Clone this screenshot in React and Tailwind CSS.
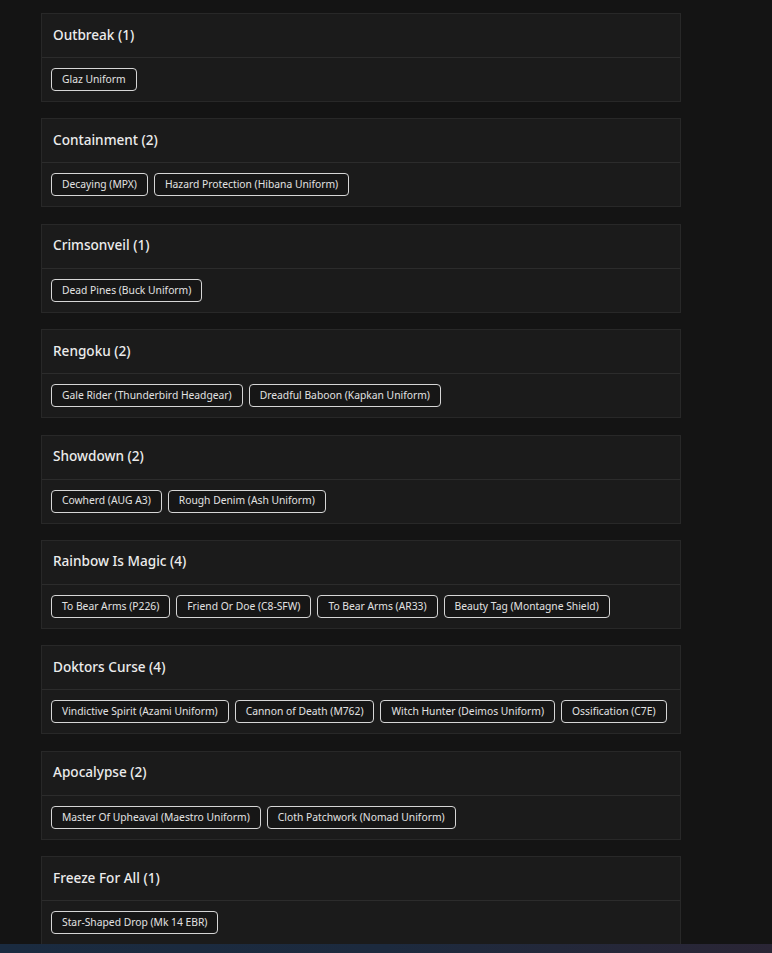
import React from 'react';

const groups = [
  { name: 'Outbreak', items: ['Glaz Uniform'] },
  { name: 'Containment', items: ['Decaying (MPX)', 'Hazard Protection (Hibana Uniform)'] },
  { name: 'Crimsonveil', items: ['Dead Pines (Buck Uniform)'] },
  { name: 'Rengoku', items: ['Gale Rider (Thunderbird Headgear)', 'Dreadful Baboon (Kapkan Uniform)'] },
  { name: 'Showdown', items: ['Cowherd (AUG A3)', 'Rough Denim (Ash Uniform)'] },
  {
    name: 'Rainbow Is Magic',
    items: ['To Bear Arms (P226)', 'Friend Or Doe (C8-SFW)', 'To Bear Arms (AR33)', 'Beauty Tag (Montagne Shield)'],
  },
  {
    name: 'Doktors Curse',
    items: ['Vindictive Spirit (Azami Uniform)', 'Cannon of Death (M762)', 'Witch Hunter (Deimos Uniform)', 'Ossification (C7E)'],
  },
  { name: 'Apocalypse', items: ['Master Of Upheaval (Maestro Uniform)', 'Cloth Patchwork (Nomad Uniform)'] },
  { name: 'Freeze For All', items: ['Star-Shaped Drop (Mk 14 EBR)'] },
];

const App = () => {
  return (
    <div
      className="relative h-[953px] overflow-hidden bg-[#141414] text-[#e6e6e6]"
      style={{ fontFamily: '"Noto Sans", "Open Sans", sans-serif' }}
    >
      <div className="ml-[41px] w-[640px] pt-[13px] flex flex-col gap-[16.4px]">
        {groups.map((g) => (
          <div key={g.name} className="bg-[#1b1b1b] border border-[#282828]">
            {/* Event header */}
            <div className="h-[44px] flex items-center px-[11px] border-b border-[#2c2c2c] pb-[2px]">
              <h3 className="text-[13.6px] font-medium text-[#ececec] leading-5">
                {g.name} ({g.items.length})
              </h3>
            </div>
            {/* Skins */}
            <div className="h-[43px] flex items-center gap-[6px] px-[9px]">
              {g.items.map((item, i) => (
                <span
                  key={i}
                  className="h-[23px] flex items-center px-[10px] rounded-[4px] border border-[#d6d6d6] bg-[#161616] text-[10.3px] text-[#e2e2e2] whitespace-nowrap"
                >
                  {item}
                </span>
              ))}
            </div>
          </div>
        ))}
      </div>

      {/* taskbar strip */}
      <div className="absolute left-0 right-0 top-[944px] h-[9px] bg-gradient-to-r from-[#1a2b40] via-[#1c2a3e] to-[#2a2535]" />
    </div>
  );
};

export default App;
